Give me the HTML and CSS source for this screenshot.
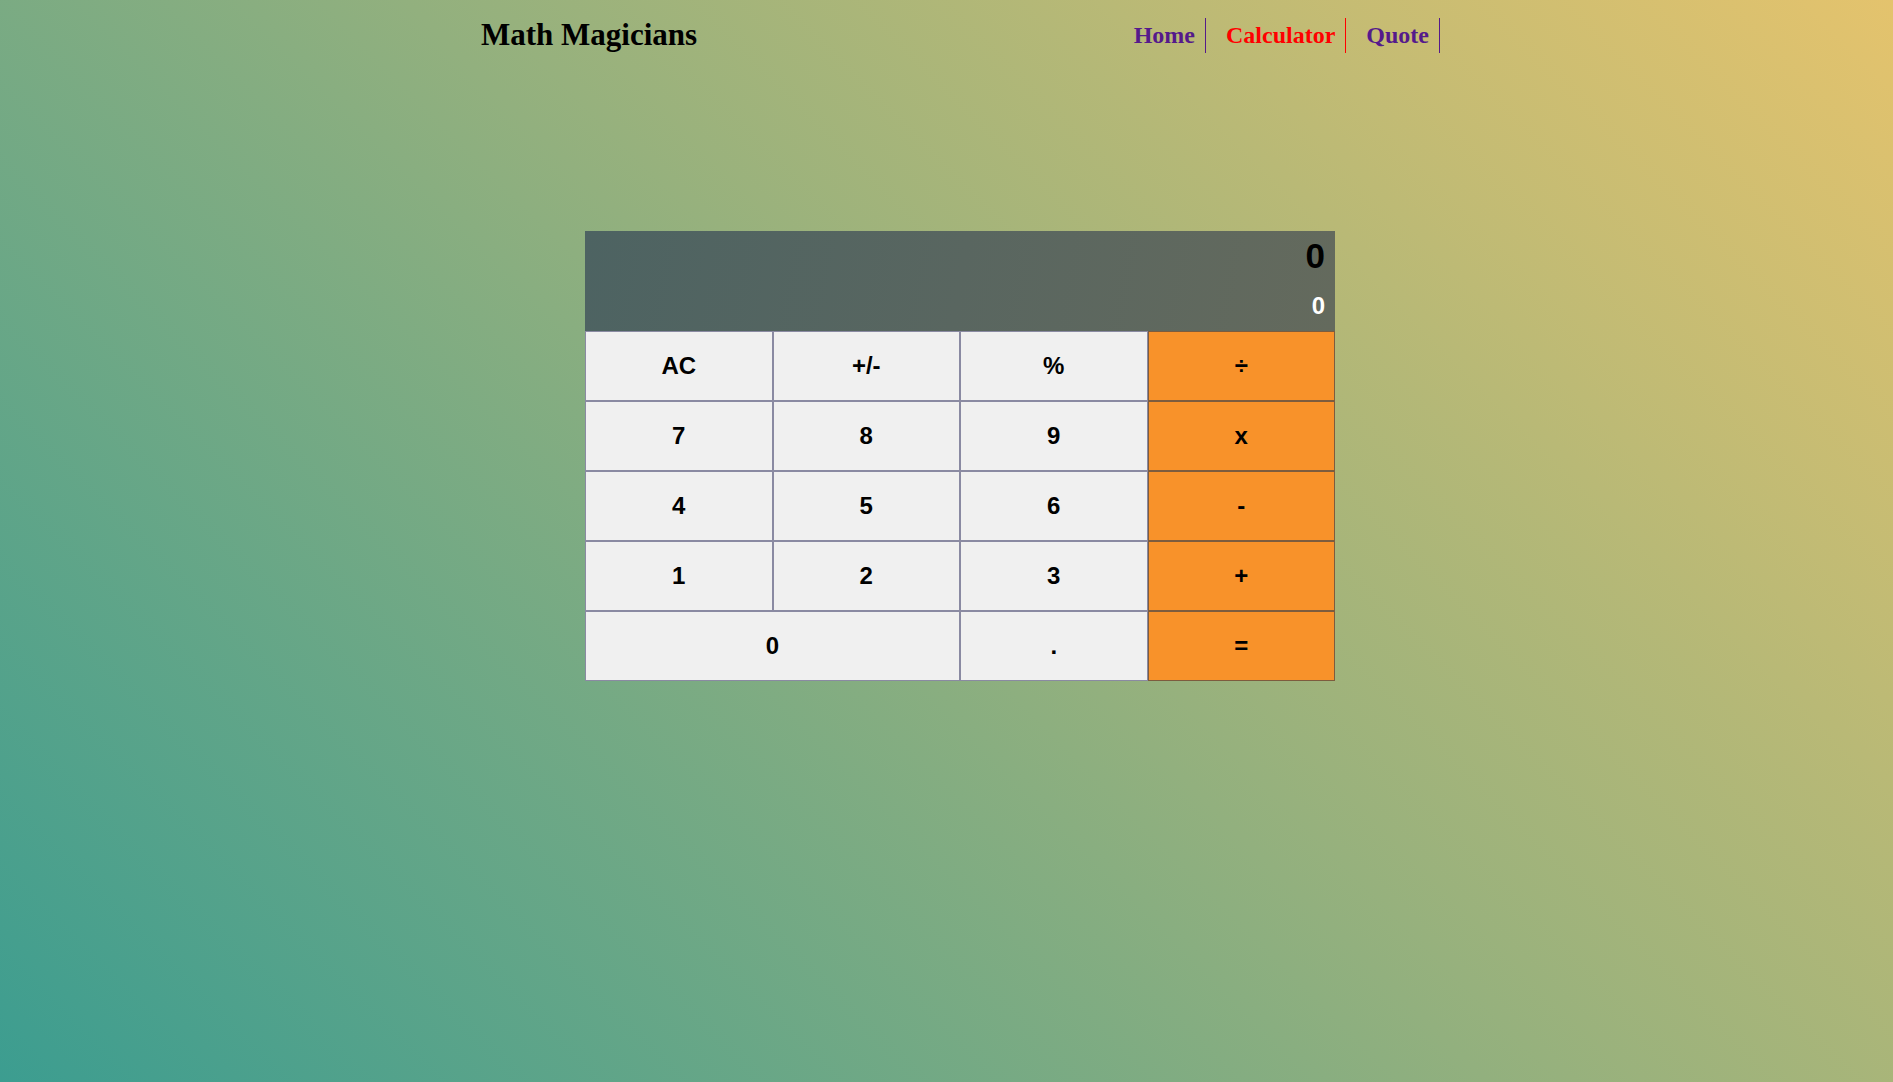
FILE: index.html
```html
<!DOCTYPE html>
<html lang="en">
<head>
<meta charset="utf-8">
<title>Math Magicians</title>
<link rel="stylesheet" href="styles.css">
</head>
<body>
<div class="page">
  <header class="header">
    <h1 class="brand">Math Magicians</h1>
    <nav>
      <ul class="nav">
        <li><a class="nav-link" href="#">Home</a></li>
        <li><a class="nav-link active" href="#">Calculator</a></li>
        <li><a class="nav-link" href="#">Quote</a></li>
      </ul>
    </nav>
  </header>
  <main class="main">
    <div class="calculator">
      <div class="display">
        <div class="result">0</div>
        <div class="operand">0</div>
      </div>
      <div class="keys">
        <button class="key">AC</button>
        <button class="key">+/-</button>
        <button class="key">%</button>
        <button class="key op">÷</button>
        <button class="key">7</button>
        <button class="key">8</button>
        <button class="key">9</button>
        <button class="key op">x</button>
        <button class="key">4</button>
        <button class="key">5</button>
        <button class="key">6</button>
        <button class="key op">-</button>
        <button class="key">1</button>
        <button class="key">2</button>
        <button class="key">3</button>
        <button class="key op">+</button>
        <button class="key wide">0</button>
        <button class="key">.</button>
        <button class="key op">=</button>
      </div>
    </div>
  </main>
</div>
</body>
</html>
```
FILE: styles.css
```css
html {
  min-height: 100%;
  background: linear-gradient(45deg, #3c9d90 0%, #92b07e 50%, #e4c36d 100%);
}

body {
  margin: 0;
  padding: 0;
  font-family: "Liberation Serif", "Times New Roman", serif;
}

.page {
  padding-left: 27px;
}

.header {
  width: 960px;
  margin: 0 auto;
  padding-top: 17px;
  display: flex;
  align-items: center;
  justify-content: space-between;
  box-sizing: border-box;
}

.brand {
  margin: 0 0 0 1px;
  font-size: 31px;
  line-height: 36px;
  font-weight: bold;
  color: #000;
}

.nav {
  list-style: none;
  margin: 0;
  padding: 0;
  display: flex;
  gap: 10px;
}

.nav-link {
  display: block;
  padding: 4px 10px;
  font-size: 24px;
  line-height: 27px;
  font-weight: bold;
  text-decoration: none;
  color: #551a8b;
  border-right: 1px solid #551a8b;
}

.nav-link.active {
  color: #ff0000;
  border-right-color: #ff0000;
}

.main {
  display: flex;
  justify-content: center;
  padding-top: 178px;
}

.calculator {
  width: 750px;
  font-family: "Liberation Sans", Arial, sans-serif;
}

.display {
  height: 100px;
  box-sizing: border-box;
  padding: 5px 10px 0;
  background: linear-gradient(100deg, #4d6362 0%, #596660 50%, #646a5d 100%);
  text-align: right;
  font-weight: bold;
}

.result {
  font-size: 35px;
  line-height: 40px;
  color: #000;
}

.operand {
  margin-top: 16px;
  font-size: 24px;
  line-height: 28px;
  color: #fff;
}

.keys {
  display: grid;
  grid-template-columns: repeat(4, 1fr);
  grid-auto-rows: 70px;
}

.key {
  margin: 0;
  box-sizing: border-box;
  height: 100%;
  border: 1px solid #8a8aa2;
  background: #f0f0f0;
  font-family: "Liberation Sans", Arial, sans-serif;
  font-size: 24px;
  font-weight: bold;
  color: #000;
  padding: 0;
}

.key.op {
  background: #f8922a;
  border-color: #7d5c3e;
}

.key.wide {
  grid-column: span 2;
}
```
